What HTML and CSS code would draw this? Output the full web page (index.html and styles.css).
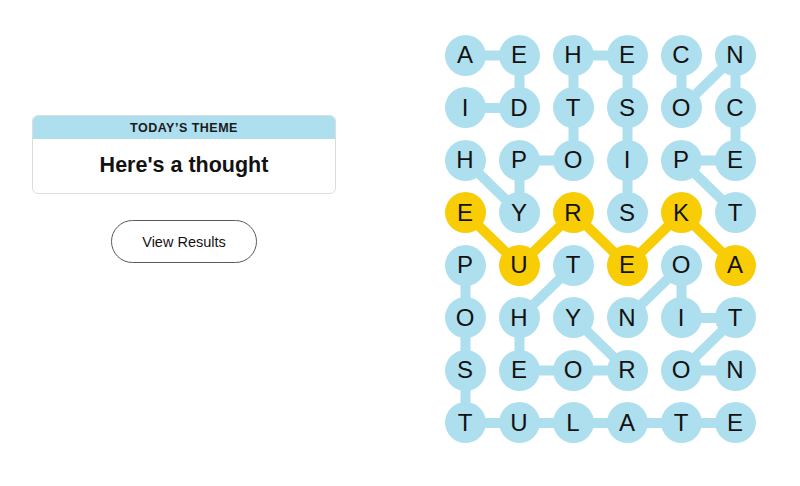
FILE: index.html
```html
<!DOCTYPE html>
<html lang="en">
<head>
<meta charset="utf-8">
<title>Strands</title>
<link rel="stylesheet" href="styles.css">
</head>
<body>
<div class="page">
  <section class="side">
    <div class="theme-card">
      <div class="theme-head">TODAY’S THEME</div>
      <div class="theme-body">Here's a thought</div>
    </div>
    <button class="results-btn">View Results</button>
  </section>
  <section class="board">
    <svg class="links" viewBox="0 0 311 408.5" aria-hidden="true">
      <g fill="none" stroke="#AEDFEE" stroke-width="10" stroke-linejoin="round">
        <polyline points="20.5,73 74.5,73 74.5,20.5 20.5,20.5"/>
        <polyline points="20.5,125.5 74.5,178 74.5,125.5 128.5,125.5 128.5,73 128.5,20.5 182.5,20.5 182.5,73 182.5,125.5 182.5,178"/>
        <polyline points="236.5,20.5 236.5,73 290.5,20.5 290.5,73 290.5,125.5 236.5,125.5 290.5,178"/>
        <polyline points="20.5,230.5 20.5,283 20.5,335.5 20.5,388 74.5,388 128.5,388 182.5,388 236.5,388 290.5,388"/>
        <polyline points="128.5,230.5 74.5,283 74.5,335.5 128.5,335.5 182.5,335.5 128.5,283"/>
        <polyline points="290.5,335.5 236.5,335.5 290.5,283 236.5,283 236.5,230.5 182.5,283"/>
      </g>
      <polyline fill="none" stroke="#F8CD05" stroke-width="10" stroke-linejoin="round" points="20.5,178 74.5,230.5 128.5,178 182.5,230.5 236.5,178 290.5,230.5"/>
    </svg>
    <div class="grid">
      <span class="cell">A</span><span class="cell">E</span><span class="cell">H</span><span class="cell">E</span><span class="cell">C</span><span class="cell">N</span>
      <span class="cell">I</span><span class="cell">D</span><span class="cell">T</span><span class="cell">S</span><span class="cell">O</span><span class="cell">C</span>
      <span class="cell">H</span><span class="cell">P</span><span class="cell">O</span><span class="cell">I</span><span class="cell">P</span><span class="cell">E</span>
      <span class="cell gold">E</span><span class="cell">Y</span><span class="cell gold">R</span><span class="cell">S</span><span class="cell gold">K</span><span class="cell">T</span>
      <span class="cell">P</span><span class="cell gold">U</span><span class="cell">T</span><span class="cell gold">E</span><span class="cell">O</span><span class="cell gold">A</span>
      <span class="cell">O</span><span class="cell">H</span><span class="cell">Y</span><span class="cell">N</span><span class="cell">I</span><span class="cell">T</span>
      <span class="cell">S</span><span class="cell">E</span><span class="cell">O</span><span class="cell">R</span><span class="cell">O</span><span class="cell">N</span>
      <span class="cell">T</span><span class="cell">U</span><span class="cell">L</span><span class="cell">A</span><span class="cell">T</span><span class="cell">E</span>
    </div>
  </section>
</div>
</body>
</html>
```
FILE: styles.css
```css
* { box-sizing: border-box; }
html, body {
  margin: 0;
  padding: 0;
  background: #ffffff;
  font-family: "Liberation Sans", Arial, sans-serif;
  color: #121212;
}
.page {
  display: flex;
  align-items: flex-start;
  width: 800px;
  height: 486px;
}
.side {
  display: flex;
  flex-direction: column;
  align-items: center;
  width: 304px;
  margin-left: 32px;
  margin-top: 115px;
}
.theme-card {
  width: 100%;
  border: 1px solid #dcdcdc;
  border-radius: 6px;
  overflow: hidden;
}
.theme-head {
  height: 23px;
  background: #AEDFEE;
  display: flex;
  align-items: center;
  justify-content: center;
  font-size: 12.5px;
  font-weight: 700;
  letter-spacing: 0.5px;
  color: #1a1a1a;
}
.theme-body {
  height: 54px;
  display: flex;
  align-items: center;
  justify-content: center;
  font-size: 21.5px;
  font-weight: 700;
  color: #121212;
  padding-bottom: 2px;
}
.results-btn {
  margin-top: 26px;
  width: 146px;
  height: 43px;
  border: 1px solid #5a5a5a;
  border-radius: 22px;
  background: #ffffff;
  font-family: "Liberation Sans", Arial, sans-serif;
  font-size: 14.5px;
  color: #121212;
  padding: 0;
}
.board {
  position: relative;
  margin-left: 108.5px;
  margin-top: 34.5px;
  width: 311px;
  height: 408.5px;
}
.links {
  position: absolute;
  left: 0;
  top: 0;
  width: 311px;
  height: 408.5px;
}
.grid {
  position: relative;
  display: grid;
  grid-template-columns: repeat(6, 41px);
  grid-auto-rows: 41px;
  column-gap: 13px;
  row-gap: 11.5px;
}
.cell {
  width: 41px;
  height: 41px;
  border-radius: 50%;
  background: #AEDFEE;
  display: flex;
  align-items: center;
  justify-content: center;
  font-size: 24px;
  line-height: 1;
  color: #121212;
}
.cell.gold { background: #F8CD05; }
```
